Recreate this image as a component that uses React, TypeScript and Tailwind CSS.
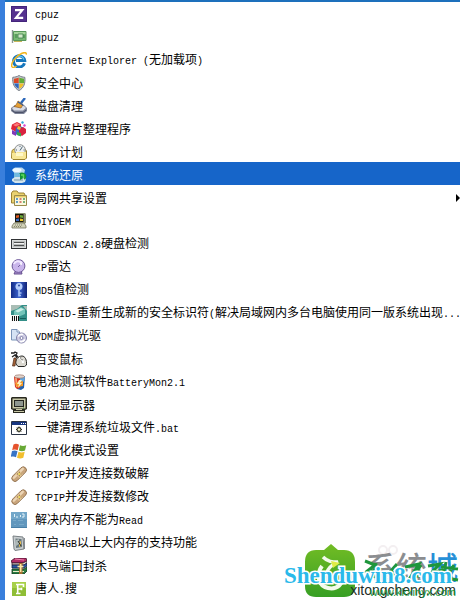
import type { ReactNode } from "react";

type MenuItem = {
  label: string;
  icon: ReactNode;
  selected?: boolean;
  submenu?: boolean;
};

const Icon = ({ children }: { children: ReactNode }) => (
  <svg viewBox="0 0 16 16" className="w-4 h-4 shrink-0" aria-hidden="true">
    {children}
  </svg>
);

const bandage = (
  <Icon>
    <g transform="rotate(-45 8 8)">
      <rect x="-1" y="5" width="18" height="6.4" rx="3.2" fill="#c9a57c" stroke="#8a6a48" strokeWidth=".8" />
      <rect x="0.5" y="5.8" width="15" height="2.4" rx="1.2" fill="#ecd5b5" />
      <rect x="5.5" y="5.4" width="5" height="5.6" fill="#e3c594" />
      <path d="M6.5 7h1M9 7h1M6.5 9.4h1M9 9.4h1" stroke="#8b6b3b" />
      <path d="M7.5 8.2h1.4" stroke="#f1e23c" strokeWidth="1.5" />
    </g>
  </Icon>
);

const items: MenuItem[] = [
  {
    label: "cpuz",
    icon: (
      <Icon>
        <path d="M0 0h16v16H0z" fill="#55318f" />
        <path d="M.5.5h15v15H.5z" fill="none" stroke="#43247a" />
        <path d="M4 4.200h7.200L5 11.800h7.200" fill="none" stroke="#fff" strokeWidth="2.200" />
      </Icon>
    ),
  },
  {
    label: "gpuz",
    icon: (
      <Icon>
        <path d="M1.5 1v13" stroke="#8b9993" strokeWidth="1.4" />
        <path d="M2.5 2.5H15v9H2.5z" fill="#76b873" stroke="#58975a" />
        <path d="M3 3h11.5v2H3z" fill="#a4d49a" />
        <path d="M7 5h5v4H7z" fill="#d3e8c9" stroke="#3f7f4d" strokeWidth=".8" />
        <path d="M3 12.5h8" stroke="#c8b55a" />
        <path d="M4 6h2M4 8h2M13 6v3" stroke="#417f4a" />
      </Icon>
    ),
  },
  {
    label: "Internet Explorer (无加载项)",
    icon: (
      <Icon>
        <path d="M13.5 11.2A5.6 5.6 0 1 1 13.7 8.6H5" fill="none" stroke="#1677bd" strokeWidth="3" />
        <path d="M12.8 7.7A4.6 4.6 0 0 0 4 7.2" fill="none" stroke="#5bc1ef" strokeWidth="1.3" />
        <path d="M1 15C-.8 11.5 5 3.5 11 1.2c3-1.1 4.6-.4 4.3 1.4M1 15c1.4 1 3.5-.2 4.6-1" fill="none" stroke="#f1b51d" strokeWidth="1.5" />
      </Icon>
    ),
  },
  {
    label: "安全中心",
    icon: (
      <Icon>
        <path d="M8 .5c2 1.4 4 1.6 5.8 1.8C14.5 8 13 13 8 15.6 3 13 1.200 8 1.8 2.300 4 2.100 6 1.900 8 .5z" fill="#c3c7ce" stroke="#777d85" />
        <path d="M7.700 2.500V8H3C2.800 6.200 2.800 5 3 3.700c2-.2 3.300-.5 4.700-1.200z" fill="#dc4a26" />
        <path d="M8.300 2.500V8H13c.3-1.800.2-3 0-4.300-2-.2-3.300-.5-4.700-1.200z" fill="#61ad36" />
        <path d="M3.200 8.500h4.500v5.300C5.300 12.600 4 11 3.200 8.500z" fill="#2f67bd" />
        <path d="M12.800 8.500H8.300v5.300c2.300-1.200 3.700-2.800 4.500-5.300z" fill="#f2bf27" />
      </Icon>
    ),
  },
  {
    label: "磁盘清理",
    icon: (
      <Icon>
        <path d="m0 10 4-3h9l3 3v3l-3 3H4l-4-3z" fill="#7d8397" />
        <path d="m1 10 4-2h8l2 2-3 2.500H3z" fill="#d9dce5" />
        <path d="M1 12.300 4 14.500h8l3-2.300" fill="none" stroke="#4c5268" />
        <path d="m14 0-4 5" stroke="#2b67ba" strokeWidth="2.400" />
        <path d="m7 3 5 3.500-2 3.500-7-1.500c2-1 3-3 4-5.500z" fill="#e6a033" stroke="#8f5a22" strokeWidth=".7" />
        <path d="m7 4 5 3" stroke="#365e9b" strokeWidth="1.400" />
      </Icon>
    ),
  },
  {
    label: "磁盘碎片整理程序",
    icon: (
      <Icon>
        <path d="M1 3.500 6 1l4 2v5l-5 3-5-3z" fill="#de2638" />
        <path d="m2 4 4-2 3 1.500-4 2z" fill="#ff7a78" />
        <path d="m5 7 4-2 4 2v5l-4 3-5-2z" fill="#3564c9" />
        <path d="m8 8 4-2 3 2v4l-4 3-3-2z" fill="#d82340" />
        <path d="m1 9 4 2v4l-4-2z" fill="#8139b8" />
        <path d="m6 11 4 1v3.500L6 14z" fill="#36a94a" />
        <path d="m10 1 2-1 1 2-2 1z" fill="#3aa6d5" />
        <path d="m13 3 2 1-1 2-2-1z" fill="#d54bd0" />
        <path d="m7 5 3 1-1 3-3-1z" fill="#f2c135" />
      </Icon>
    ),
  },
  {
    label: "任务计划",
    icon: (
      <Icon>
        <path d="M1 6.500 3 5h11l1.500 2v7L14 15.500H2L.5 14z" fill="#efd264" stroke="#9c8330" />
        <circle cx="9" cy="6" r="5.300" fill="#eef0f1" stroke="#8e9191" />
        <path d="m9 6.500 2.500-4M9 2v1M5 6h1M12.500 6h1" stroke="#4c6676" />
        <path d="M1 9h4l1-1h9v5.500L13.500 15H2l-1-1z" fill="#f8e797" />
        <path d="M5 9h7v3H5z" fill="#fff8c8" />
      </Icon>
    ),
  },
  {
    label: "系统还原",
    selected: true,
    icon: (
      <Icon>
        <path d="M1 3 4 .500h7L14 3l-1 4H4z" fill="#b6d7ef" />
        <ellipse cx="6" cy="3" rx="4.500" ry="2" fill="#eefaff" />
        <path d="M3 6h10v6H3z" fill="#72bbdf" />
        <path d="M1 12 4 10h9l2 2-1 3-3 1H4l-3-2z" fill="#d2e4ec" />
        <path d="M3 13h9" stroke="#7496a9" />
        <path d="M8 6.500C11 4.500 15 6 15.500 9.500L14 13l-1.500-2L9 13V7z" fill="#15923c" />
        <path d="M10 8h2.500v3" fill="none" stroke="#5edb59" strokeWidth="1.500" />
      </Icon>
    ),
  },
  {
    label: "局网共享设置",
    submenu: true,
    icon: (
      <Icon>
        <path d="M.500 13V3L2 1h4l1.500 2H13l1 2v8z" fill="#ead270" stroke="#9c8333" />
        <path d="M3.500 5.500h12v10h-12z" fill="#fbf8de" stroke="#9b8b4b" />
        <path d="M4 6h11v1.500H4z" fill="#e7cd67" />
        <path d="M5 9h2M5 12h2" stroke="#2f7fc1" strokeWidth="1.500" />
        <path d="M8.500 9h2M8.500 12h2" stroke="#ce574f" strokeWidth="1.500" />
        <path d="M12 9h2M12 12h2" stroke="#4c9b5b" strokeWidth="1.500" />
      </Icon>
    ),
  },
  {
    label: "DIYOEM",
    icon: (
      <Icon>
        <path d="M4 0h10l1 1v9l-2 1H4z" fill="#8e8f73" />
        <path d="M4 1h8.500v8H4z" fill="#17170f" />
        <path d="M5 2.500 8 2v2.500L5 5z" fill="#df5b21" />
        <path d="m9 2 3 .5V5L9 4.500z" fill="#68a835" />
        <path d="M5 6 8 5.500V8H5z" fill="#3a65bd" />
        <path d="m9 5.500 3 .5v2H9z" fill="#eac42b" />
        <path d="M3 10h10l2 3v2H1v-2z" fill="#d0d0b7" stroke="#74745d" strokeWidth=".800" />
        <path d="M4 12h8M3 13.500h7" stroke="#85856d" strokeDasharray="1 1" />
      </Icon>
    ),
  },
  {
    label: "HDDSCAN 2.8硬盘检测",
    icon: (
      <Icon>
        <path d="M0 3h16v10H0z" fill="#303235" />
        <path d="M1 4h14v8H1z" fill="#dadcdc" />
        <path d="M2 5h12v6H2z" fill="#babdbd" />
        <path d="M3 6.500h10M3 9.500h10" stroke="#4e5050" />
        <path d="M3 7.500h10" stroke="#f3f3f3" />
      </Icon>
    ),
  },
  {
    label: "IP雷达",
    icon: (
      <Icon>
        <path d="m5 11-2 4h8l-1-4" fill="#a98bcf" stroke="#65508d" />
        <circle cx="7.500" cy="7" r="6.400" fill="#c9b5eb" stroke="#6d5898" />
        <path d="M3 5c1-3 5-4 8-1" fill="none" stroke="#f0e6ff" strokeWidth="2" />
        <path d="m7 8 3-3" stroke="#75619e" />
        <circle cx="10" cy="5" r="1" fill="#fff" />
      </Icon>
    ),
  },
  {
    label: "MD5值检测",
    icon: (
      <Icon>
        <defs>
          <linearGradient id="keyBg" x1="0" x2="1" y1="0" y2="0">
            <stop offset="0" stopColor="#122a85" />
            <stop offset=".5" stopColor="#3c63ce" />
            <stop offset="1" stopColor="#112477" />
          </linearGradient>
        </defs>
        <path d="M0 0h16v16H0z" fill="url(#keyBg)" />
        <circle cx="8" cy="4.500" r="3.500" fill="#b6cefb" />
        <circle cx="8" cy="3.500" r="1" fill="#27469e" />
        <path d="M8 7v7.500M8 11h2.500M8 13.500h2" stroke="#a5c1f5" strokeWidth="1.600" />
      </Icon>
    ),
  },
  {
    label: "NewSID-重新生成新的安全标识符(解决局域网内多台电脑使用同一版系统出现...",
    icon: (
      <Icon>
        <path d="M0 0h16v16H0z" fill="#338f88" />
        <path d="M0 0h11L6 4 0 6zM12 1h4v5z" fill="#a9bdb5" />
        <path d="m3 6 7-4 4 2v5l-7 3-4-2z" fill="#74c4b9" />
        <path d="m4 6 6-3 3 1.500-6 3z" fill="#c9eee6" />
        <path d="M0 10h8v6H0z" fill="#f4f6f3" />
        <path d="M1.500 11v5M3.500 11v5M5.500 11v5M7.500 11v5" stroke="#111" />
        <path d="M9 13.500h6" stroke="#145d59" />
      </Icon>
    ),
  },
  {
    label: "VDM虚拟光驱",
    icon: (
      <Icon>
        <path d="M.500 1.500H6L8.500 4v8h-8z" fill="#d5e3f4" stroke="#7893b7" />
        <path d="M6 1.500V4h2.500" fill="#fff" stroke="#7893b7" />
        <circle cx="10.500" cy="10" r="5" fill="#cfcde4" stroke="#8080a8" />
        <path d="M7 8.500c1-2 3-2.500 5-2M9 13.500c2 .5 4-.5 5-2" fill="none" stroke="#fff" strokeWidth="1.500" />
        <circle cx="10.500" cy="10" r="1.500" fill="#fff" stroke="#8080a8" />
      </Icon>
    ),
  },
  {
    label: "百变鼠标",
    icon: (
      <Icon>
        <path d="M5 13C4 9 7 5 11 5c3 0 5 4 4.500 9l-2 1.500H7z" fill="#dad8d0" stroke="#272725" />
        <path d="M8 7c2 0 4 2 4 5" fill="none" stroke="#fff" strokeWidth="2" />
        <path d="M10 5.500c-1 2 0 3 2 3.500" fill="none" stroke="#77756e" />
        <path d="M0 2h3l1-1 2 1-1 2 2 2M1 6l3-2 2 3" fill="none" stroke="#222" strokeWidth="1.300" />
        <path d="m5 7-1 8H1.500L3 7z" fill="#a66438" stroke="#4e2a17" strokeWidth=".700" />
      </Icon>
    ),
  },
  {
    label: "电池测试软件BatteryMon2.1",
    icon: (
      <Icon>
        <path d="m5 4 9-2-1 12-3 2-4-1z" fill="#2360ad" />
        <path d="m9 2 5 .5-1 5-4 1z" fill="#63a6dd" />
        <path d="m3 3 6-1v12l-3 1-2-2z" fill="#d7331f" />
        <path d="m4 4 2-.5.5 10-1.500-.5z" fill="#f9a075" />
        <path d="m4 9 8-2v5l-6 1z" fill="#f49a27" />
        <ellipse cx="8.500" cy="2.500" rx="5" ry="1.700" fill="#dfd4cc" stroke="#9c7468" strokeWidth=".700" />
        <path d="m8 6-2 4h2l-1 4 4-5H9l2-3z" fill="#fff1c4" />
      </Icon>
    ),
  },
  {
    label: "关闭显示器",
    icon: (
      <Icon>
        <path d="M1 0h14l1 1v11l-2 1v3H2v-3l-2-1V1z" fill="#29291f" />
        <path d="M1.500 1.500h13v10h-13z" fill="#c9c9a7" />
        <path d="M3 3h10v7H3z" fill="#24251f" />
        <path d="M4 4h8v5H4z" fill="#8f9790" />
        <path d="M5 12h6v1H5zM3 14h10v1H3z" fill="#c9c9a7" />
        <path d="M12 11h1" stroke="#247a2b" />
      </Icon>
    ),
  },
  {
    label: "一键清理系统垃圾文件.bat",
    icon: (
      <Icon>
        <path d="M.500 1.500h15v13H.500z" fill="#fff" stroke="#293344" />
        <path d="M1 2h14v3H1z" fill="#173681" />
        <path d="M10 3.500h1M12 3.500h1M14 3.500h1" stroke="#fff" />
        <circle cx="8" cy="9.500" r="2" fill="#c5c48d" stroke="#26261e" />
        <path d="M8 6.500v1M8 11.500v1M5 9.500h1M10 9.500h1M6 7.500l.700.700M9.500 11l.700.700M10 7.500l-.700.700M6.700 11l-.700.700" stroke="#26261e" />
        <circle cx="8" cy="9.500" r=".800" fill="#fff" />
      </Icon>
    ),
  },
  {
    label: "XP优化模式设置",
    icon: (
      <Icon>
        <path d="M2.500 1.500C4.500.500 6 .700 8 1.700L6.700 7.300C5 6.300 3 6.200 1.200 7z" fill="#e5532d" />
        <path d="M9 2.200c2 1 4 1 6.300 0L14 7.600c-2.200 1-4.200 1-6.200 0z" fill="#68a936" />
        <path d="M1 8c2-.800 3.700-.700 5.500.3L5 14.300C3.300 13.200 1.500 13.200-.300 14z" fill="#3874c5" />
        <path d="M7.500 8.800c2 1 4 1 6.200 0L12.300 14.700c-2 1-4.300 1-6.300 0z" fill="#f2be2d" />
      </Icon>
    ),
  },
  { label: "TCPIP并发连接数破解", icon: bandage },
  { label: "TCPIP并发连接数修改", icon: bandage },
  {
    label: "解决内存不能为Read",
    icon: (
      <Icon>
        <path d="M0 0h16v16H0z" fill="#6297bd" />
        <path d="M0 0h16v7H0z" fill="#73a7c9" />
        <path d="M3.500 2v3M5 5h2M9.500 3v2M11 2h2v3h-2" fill="none" stroke="#e2f2f9" />
        <path d="M2 8.500h3M7 8.500h5M3 12.500h2M8 12.500h5" stroke="#79aaca" />
        <path d="M0 15.500h16" stroke="#487fa7" />
      </Icon>
    ),
  },
  {
    label: "开启4GB以上大内存的支持功能",
    icon: (
      <Icon>
        <path d="m2 1 10 1 1 12-9 1.500L3 14z" fill="#c9ced0" stroke="#798084" />
        <path d="m4.500 3.500 6 .5.5 8-6 1z" fill="#68777c" />
        <path d="m5 5 3-1v5l-3 2z" fill="#adb8b7" />
        <path d="m8 7 2-1v5l-2 1z" fill="#e3bc4f" />
        <path d="m7 6 3 5" stroke="#282d2e" />
        <path d="M13.300 3v11" stroke="#6d7478" />
      </Icon>
    ),
  },
  {
    label: "木马端口封杀",
    icon: (
      <Icon>
        <path d="m0 3 4-3h11l1 3-4 2H1z" fill="#b32c67" stroke="#39142a" strokeWidth=".800" />
        <path d="m4 1 9 1" stroke="#ee83ac" />
        <path d="M1 5h11l4-2v2l-3 2H1z" fill="#e6e6d4" stroke="#39142a" strokeWidth=".800" />
        <path d="M1 7h12l3-2v3l-3 2H1z" fill="#2957a5" stroke="#151d3c" strokeWidth=".800" />
        <path d="M1 11h12l3-2v4l-3 3H1z" fill="#297c42" stroke="#123320" strokeWidth=".800" />
        <path d="M2 13.500h11" stroke="#ececca" />
        <path d="M8 5h3.500v11H8z" fill="#a66e30" />
        <path d="M6.500 8.500h6M9.700 6v8" stroke="#fae8a7" strokeWidth="1.500" />
      </Icon>
    ),
  },
  {
    label: "唐人.搜",
    icon: (
      <Icon>
        <path d="M1 1h14v14H1z" fill="#8fbe36" />
        <path d="M1 1h14v6H1z" fill="#a7d04a" />
        <path d="M5 3.500h7.500V6M5 12.500h4.500M6.700 3.500v9M6.700 8H10M10.500 6.700v2.600" fill="none" stroke="#fff" strokeWidth="1.600" />
      </Icon>
    ),
  },
];

// Half-width runs take a 6px cell next to 12px Chinese glyphs
const MenuLabel = ({ text }: { text: string }) => (
  <span className="whitespace-pre font-['Noto_Sans_CJK_SC',sans-serif] text-[12px] leading-[18px]">
    {text.split(/([\x20-\x7e]+)/).map((run, i) =>
      i % 2 ? (
        <span key={i} className="font-['Liberation_Mono',monospace] text-[10px]">
          {run}
        </span>
      ) : (
        run
      )
    )}
  </span>
);

const Watermark = () => (
  <div className="pointer-events-none absolute bottom-0 right-0 h-14 w-[180px] whitespace-nowrap">
    <svg viewBox="0 0 52 54" className="absolute bottom-0.5 left-6 h-[54px] w-[52px]" aria-hidden="true">
      <defs>
        <linearGradient id="leaf" x1="0" x2="0" y1="0" y2="1">
          <stop offset="0" stopColor="#72bc24" />
          <stop offset="1" stopColor="#379f24" />
        </linearGradient>
      </defs>
      <path d="M20 6 27 0l7 6h6q11 0 11 12v24q0 11-11 11H12Q1 53 1 42V18Q1 6 12 6z" fill="url(#leaf)" />
      <path d="M18 22c-6 8-4 20 6 22 9 2 16-4 15-14" fill="none" stroke="#f3faec" strokeWidth="4" />
      <path d="M19 13c5 5 9 5 15 5-5 2-10 6-12 12" fill="none" stroke="#f3faec" strokeWidth="3.500" />
      <path d="m27 17 9 2-7 5z" fill="#e0ec47" />
    </svg>
    <svg viewBox="0 0 24 12" className="absolute left-[96px] top-0 h-3 w-6" fill="none" stroke="#f3eff1" strokeWidth="2" aria-hidden="true">
      <circle cx="7" cy="6" r="4" />
      <circle cx="17" cy="6" r="4" />
    </svg>
    <div className="absolute right-0.5 top-1.5 font-['Noto_Sans_CJK_SC',sans-serif] text-[31px] font-medium leading-8 text-[#8b8d90]">
      系统<span className="text-[#268fd7]">城</span>
    </div>
    <svg viewBox="0 0 98 28" className="absolute right-0 top-3 h-7 w-[98px]" fill="none" stroke="#1f963c" aria-hidden="true">
      <path d="m3 5 10 4-9 7 13-2-5 8M14 7l-3 14M35 8l-8 9 9-1-10 8M43 11l14-3-9 14 12-3M59 9l-8 12M66 10l12-2-9 9 12-3-12 10M84 6l-4 18M79 11l17 2M92 9l-8 13 12 2" strokeWidth="3" />
    </svg>
    <div className="absolute bottom-0 right-1 font-['Liberation_Sans',sans-serif] text-[14px] leading-5 text-[#222d25]">
      xitongcheng.com
    </div>
    <div className="absolute bottom-0 right-1 font-['Liberation_Sans',sans-serif] text-[11px] leading-4 text-[#179638]">
      www.kkxinyx.com
    </div>
    <div className="absolute right-2 top-[18px] font-['Liberation_Serif',serif] text-[23px] font-bold leading-7 text-[#2ab9ea] [-webkit-text-stroke:3px_white] [paint-order:stroke_fill]">
      Shenduwin8.com
    </div>
  </div>
);

const App = () => {
  return (
    <main className="relative min-h-screen overflow-hidden border-l-[5px] border-[#397fdc] bg-white pt-px text-black shadow-[inset_0_2px_0_#1d70bc]">
      <ul>
        {items.map((item) => (
          <li key={item.label}>
            <button
              type="button"
              className={`flex h-[23px] w-full items-center gap-2 overflow-hidden pl-1.5 pt-[3px] text-left ${
                item.selected ? "bg-[#1665c9] text-white" : ""
              }`}
            >
              {item.icon}
              <MenuLabel text={item.label} />
              {item.submenu && (
                <svg viewBox="0 0 4 8" className="ml-auto h-2 w-1 shrink-0" aria-hidden="true">
                  <path d="M0 0v8l4-4z" />
                </svg>
              )}
            </button>
          </li>
        ))}
      </ul>
      <Watermark />
    </main>
  );
};

export default App;
